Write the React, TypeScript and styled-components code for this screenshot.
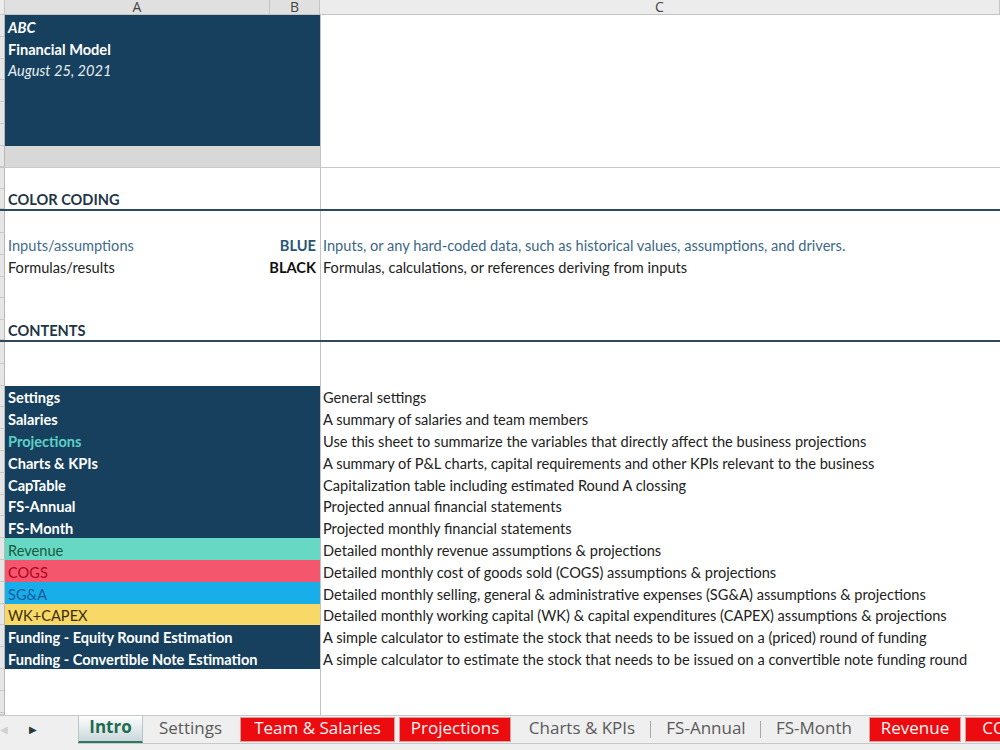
import React from "react";
import styled, { createGlobalStyle, css } from "styled-components";

const Global = createGlobalStyle`
  html, body { margin: 0; padding: 0; background: #ffffff; }
  body { width: 1000px; height: 750px; overflow: hidden; }
`;

const ROW_H = 21.8;
const COLS = "5px 265px 50px 1fr";

const Page = styled.div`
  width: 1000px;
  height: 750px;
  display: flex;
  flex-direction: column;
  overflow: hidden;
  font-family: Lato, "Open Sans", sans-serif;
  font-size: 14.6px;
  color: #222;
`;

const HeaderRow = styled.div`
  display: grid;
  grid-template-columns: ${COLS};
  height: 15px;
  flex: 0 0 15px;
  background: #e6e6e6;
  border-bottom: 1px solid #c4c4c4;
  box-sizing: border-box;
`;

const ColHead = styled.div<{ $sel?: boolean }>`
  display: flex;
  justify-content: center;
  align-items: center;
  font-family: "Open Sans", sans-serif;
  font-size: 14px;
  line-height: 14px;
  color: #444;
  border-right: 1px solid #c4c4c4;
  background: ${(p) => (p.$sel ? "#e0e0e0" : "#ececec")};
`;

const Body = styled.div`
  flex: 1 1 auto;
  display: flex;
  flex-direction: column;
  overflow: hidden;
`;

const Filler = styled.div`
  flex: 1 1 auto;
  display: grid;
  grid-template-columns: ${COLS};
`;

type Fill = "none" | "navy" | "gray" | "teal" | "red" | "blue" | "yellow";

const fills: Record<Fill, string> = {
  none: "transparent",
  navy: "#16405e",
  gray: "#d8d8d8",
  teal: "#67d8c4",
  red: "#f4576d",
  blue: "#17aeea",
  yellow: "#f8d867",
};

const Row = styled.div<{ $line?: "thin" | "thick" }>`
  display: grid;
  grid-template-columns: ${COLS};
  height: ${ROW_H}px;
  flex: 0 0 ${ROW_H}px;
  box-sizing: border-box;
  ${(p) =>
    p.$line === "thick" &&
    css`
      border-bottom: 2px solid #2c4a5c;
    `}
  ${(p) =>
    p.$line === "thin" &&
    css`
      border-bottom: 1px solid #c8c8c8;
    `}
`;

const RowHead = styled.div`
  background: #e6e6e6;
  border-right: 1px solid #b8b8b8;
  border-bottom: 1px solid #c8c8c8;
  box-sizing: border-box;
`;

const Cell = styled.div<{
  $fill?: Fill;
  $color?: string;
  $bold?: boolean;
  $italic?: boolean;
  $right?: boolean;
  $divider?: boolean;
}>`
  display: flex;
  align-items: flex-end;
  justify-content: ${(p) => (p.$right ? "flex-end" : "flex-start")};
  padding: 0 4px 1px 3px;
  box-sizing: border-box;
  white-space: nowrap;
  overflow: visible;
  background: ${(p) => fills[p.$fill || "none"]};
  color: ${(p) => p.$color || "#222"};
  font-weight: ${(p) => (p.$bold ? 700 : 400)};
  font-style: ${(p) => (p.$italic ? "italic" : "normal")};
  line-height: 17px;
  ${(p) =>
    p.$divider &&
    css`
      border-left: 1px solid #c4c4c4;
      padding-left: 2px;
    `}
`;

const Filled = styled.div`
  border-left: 1px solid #c4c4c4;
`;

const TabBar = styled.div`
  flex: 0 0 35px;
  height: 35px;
  background: #efefef;
  border-top: 1px solid #c8c8c8;
  box-sizing: border-box;
  display: flex;
  align-items: flex-start;
  font-family: "Open Sans", sans-serif;
  font-size: 17px;
  overflow: hidden;
`;

const Nav = styled.div`
  width: 78px;
  flex: 0 0 78px;
  height: 26px;
  display: flex;
  align-items: center;
  font-size: 10px;
  & > span:first-child { color: #d0d0d0; width: 29px; }
  & > span:last-child { color: #2a3a3a; }
`;

const Tabs = styled.div`
  display: flex;
  align-items: stretch;
  height: 27px;
  border-bottom: 1px solid #c8c8c8;
  flex: 1 1 auto;
`;

const Tab = styled.div<{ $kind: "active" | "plain" | "red"; $w: number; $sep?: boolean }>`
  width: ${(p) => p.$w}px;
  flex: 0 0 ${(p) => p.$w}px;
  display: flex;
  align-items: center;
  justify-content: center;
  box-sizing: border-box;
  white-space: nowrap;
  position: relative;
  line-height: 20px;
  padding-bottom: 3px;
  ${(p) =>
    p.$kind === "active" &&
    css`
      background: linear-gradient(#ffffff, #cad7db);
      color: #1f6b50;
      font-weight: 700;
      border-left: 1px solid #b9c4c6;
      border-right: 1px solid #b9c4c6;
      border-bottom: 2px solid #2d7a5c;
      margin-top: -1px;
    `}
  ${(p) =>
    p.$kind === "plain" &&
    css`
      color: #5a5a5a;
    `}
  ${(p) =>
    p.$kind === "red" &&
    css`
      background: #ec0b0f;
      color: #fff5f5;
      border: 1px solid #d9a0a0;
      margin: 1px 2px 1px 2px;
    `}
  ${(p) =>
    p.$sep &&
    css`
      &::after {
        content: "";
        position: absolute;
        right: 0;
        top: 5px;
        height: 17px;
        border-right: 1px solid #a8a8a8;
      }
    `}
`;

type Spec = {
  a?: string;
  b?: string;
  c?: string;
  fill?: Fill;
  aColor?: string;
  bColor?: string;
  cColor?: string;
  bold?: boolean;
  italic?: boolean;
  line?: "thin" | "thick";
};

const NAVY_TXT = "#ffffff";

const rows: Spec[] = [
  { a: "ABC", fill: "navy", aColor: NAVY_TXT, bold: true, italic: true },
  { a: "Financial Model", fill: "navy", aColor: NAVY_TXT, bold: true },
  { a: "August 25, 2021", fill: "navy", aColor: "#e6edf2", italic: true },
  { fill: "navy" },
  { fill: "navy" },
  { fill: "navy" },
  { fill: "gray", line: "thin" },
  {},
  { a: "COLOR CODING", bold: true, aColor: "#1f3646", line: "thick" },
  {},
  {
    a: "Inputs/assumptions",
    aColor: "#416c8c",
    b: "BLUE",
    bColor: "#285577",
    c: "Inputs, or any hard-coded data, such as historical values, assumptions, and drivers.",
    cColor: "#3b6787",
  },
  {
    a: "Formulas/results",
    b: "BLACK",
    bColor: "#111",
    c: "Formulas, calculations, or references deriving from inputs",
  },
  {},
  {},
  { a: "CONTENTS", bold: true, aColor: "#1f3646", line: "thick" },
  {},
  {},
  { a: "Settings", fill: "navy", aColor: NAVY_TXT, bold: true, c: "General settings" },
  { a: "Salaries", fill: "navy", aColor: NAVY_TXT, bold: true, c: "A summary of salaries and team members" },
  {
    a: "Projections",
    fill: "navy",
    aColor: "#5dd0c7",
    bold: true,
    c: "Use this sheet to summarize the variables that directly affect the business projections",
  },
  {
    a: "Charts & KPIs",
    fill: "navy",
    aColor: NAVY_TXT,
    bold: true,
    c: "A summary of P&L charts, capital requirements and other KPIs relevant to the business",
  },
  {
    a: "CapTable",
    fill: "navy",
    aColor: NAVY_TXT,
    bold: true,
    c: "Capitalization table including estimated Round A clossing",
  },
  { a: "FS-Annual", fill: "navy", aColor: NAVY_TXT, bold: true, c: "Projected annual financial statements" },
  { a: "FS-Month", fill: "navy", aColor: NAVY_TXT, bold: true, c: "Projected monthly financial statements" },
  {
    a: "Revenue",
    fill: "teal",
    aColor: "#1a5a3e",
    c: "Detailed monthly revenue assumptions & projections",
  },
  {
    a: "COGS",
    fill: "red",
    aColor: "#b3001f",
    c: "Detailed monthly cost of goods sold (COGS) assumptions & projections",
  },
  {
    a: "SG&A",
    fill: "blue",
    aColor: "#1a5a98",
    c: "Detailed monthly selling, general & administrative expenses (SG&A) assumptions & projections",
  },
  {
    a: "WK+CAPEX",
    fill: "yellow",
    aColor: "#3a2f08",
    c: "Detailed monthly working capital (WK) & capital expenditures (CAPEX) assumptions & projections",
  },
  {
    a: "Funding - Equity Round Estimation",
    fill: "navy",
    aColor: NAVY_TXT,
    bold: true,
    c: "A simple calculator to estimate the stock that needs to be issued on a (priced) round of funding",
  },
  {
    a: "Funding - Convertible Note Estimation",
    fill: "navy",
    aColor: NAVY_TXT,
    bold: true,
    c: "A simple calculator to estimate the stock that needs to be issued on a convertible note funding round",
  },
  {},
  {},
];

const tabs: { label: string; kind: "active" | "plain" | "red"; w: number; sep?: boolean }[] = [
  { label: "Intro", kind: "active", w: 65 },
  { label: "Settings", kind: "plain", w: 95 },
  { label: "Team & Salaries", kind: "red", w: 155 },
  { label: "Projections", kind: "red", w: 112 },
  { label: "Charts & KPIs", kind: "plain", w: 138, sep: true },
  { label: "FS-Annual", kind: "plain", w: 110, sep: true },
  { label: "FS-Month", kind: "plain", w: 106 },
  { label: "Revenue", kind: "red", w: 92 },
  { label: "COGS", kind: "red", w: 80 },
];

export default function App() {
  return (
    <Page>
      <Global />
      <HeaderRow>
        <ColHead />
        <ColHead $sel>A</ColHead>
        <ColHead $sel>B</ColHead>
        <ColHead>C</ColHead>
      </HeaderRow>
      <Body>
        {rows.map((r, i) => (
          <Row key={i} $line={r.line}>
            <RowHead />
            <Cell $fill={r.fill} $color={r.aColor} $bold={r.bold} $italic={r.italic}>
              {r.a}
            </Cell>
            <Cell $fill={r.fill} $color={r.bColor} $bold $right>
              {r.b}
            </Cell>
            <Cell $divider $color={r.cColor}>
              {r.c}
            </Cell>
          </Row>
        ))}
        <Filler>
          <RowHead />
          <div />
          <div />
          <Filled />
        </Filler>
      </Body>
      <TabBar>
        <Nav>
          <span>◀</span>
          <span>▶</span>
        </Nav>
        <Tabs>
          {tabs.map((t) => (
            <Tab key={t.label} $kind={t.kind} $w={t.w} $sep={t.sep}>
              {t.label}
            </Tab>
          ))}
        </Tabs>
      </TabBar>
    </Page>
  );
}
